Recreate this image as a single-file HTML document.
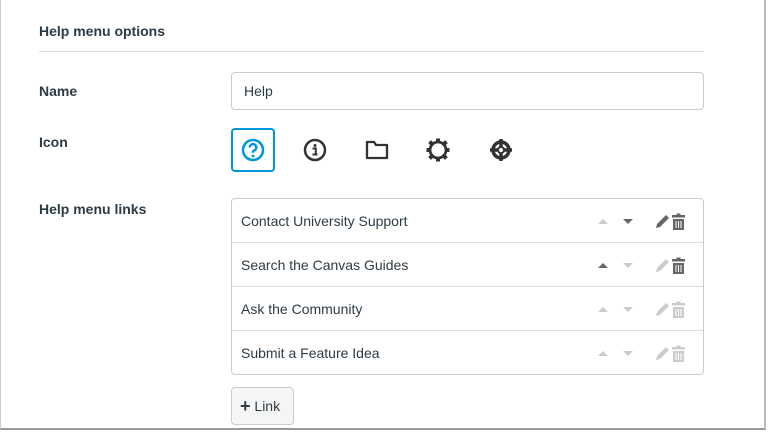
<!DOCTYPE html>
<html><head><style>
body{margin:0;width:769px;height:434px;background:#fff;font-family:"Liberation Sans",sans-serif;color:#2d3b45;overflow:hidden;position:relative}
.card{position:absolute;left:0;top:0;width:766px;height:430px;border-right:2px solid #bbb;border-bottom:2px solid #999;border-left:1px solid #ccc;box-sizing:border-box}
.h{position:absolute;left:39px;top:23px;font-size:14px;font-weight:bold}
.hr{position:absolute;left:39px;top:51px;width:665px;height:1px;background:#ddd}
.lbl{position:absolute;left:39px;font-size:14px;font-weight:bold}
.inp{position:absolute;left:231px;top:72px;width:473px;height:38px;border:1px solid #ccc;border-radius:4px;box-sizing:border-box;padding:10px 12px;font-size:14px}
.ic{position:absolute;top:128px;width:44px;height:44px;box-sizing:border-box}
.ic svg{position:absolute;left:10px;top:10px}
.sel{border:2px solid #0096db;border-radius:4px}
.list{position:absolute;left:231px;top:198px;width:473px;height:177px;border:1px solid #ccc;border-radius:4px;box-sizing:border-box}
.row{height:44px;border-bottom:1px solid #ddd;position:relative;font-size:14px;box-sizing:border-box}
.row:last-child{border-bottom:none}
.row span{position:absolute;left:9px;top:14px}
.row svg{position:absolute;left:364px;top:13px}
.btn{position:absolute;left:231px;top:387px;width:63px;height:38px;background:#f5f5f5;border:1px solid #ccc;border-radius:4px;box-sizing:border-box;font-size:14px;padding:10px 0 0 8px}
</style></head><body>
<div class="card"></div>
<div class="h">Help menu options</div>
<div class="hr"></div>
<div class="lbl" style="top:83px">Name</div>
<div class="inp">Help</div>
<div class="lbl" style="top:134px">Icon</div>
<div class="ic sel" style="left:231px"><svg width="24" height="24" viewBox="0 0 24 24" style="left:8px;top:8px"><circle cx="12" cy="12" r="10" fill="none" stroke="#0096db" stroke-width="2.5"/><path d="M8.7 9.5a3.3 3.3 0 1 1 4.3 3.1c-.8.3-1 .8-1 1.6v.6" fill="none" stroke="#0096db" stroke-width="2.5"/><circle cx="12" cy="18" r="1.4" fill="#0096db"/></svg></div>
<div class="ic" style="left:293px"><svg width="24" height="24" viewBox="0 0 24 24"><circle cx="12" cy="12" r="10" fill="none" stroke="#333" stroke-width="2.5"/><circle cx="12" cy="7.5" r="1.5" fill="#333"/><path d="M9.5 10.5h3.3v6h1.7M9.5 16.5h5" fill="none" stroke="#333" stroke-width="2"/></svg></div>
<div class="ic" style="left:355px"><svg width="24" height="24" viewBox="0 0 24 24"><path d="M2 4h7l2 3h11v13H2z" fill="none" stroke="#333" stroke-width="2.3" stroke-linejoin="round"/></svg></div>
<div class="ic" style="left:416px"><svg width="24" height="24" viewBox="0 0 24 24"><circle cx="12" cy="12" r="8" fill="none" stroke="#333" stroke-width="2.8"/><g fill="#333"><rect x="10" y="0.5" width="4" height="4"/><rect x="10" y="19.5" width="4" height="4"/><rect x="0.5" y="10" width="4" height="4"/><rect x="19.5" y="10" width="4" height="4"/><rect x="3" y="3" width="4" height="4" transform="rotate(45 5 5)"/><rect x="17" y="3" width="4" height="4" transform="rotate(45 19 5)"/><rect x="3" y="17" width="4" height="4" transform="rotate(45 5 19)"/><rect x="17" y="17" width="4" height="4" transform="rotate(45 19 19)"/></g></svg></div>
<div class="ic" style="left:479px"><svg width="24" height="24" viewBox="0 0 24 24"><circle cx="12" cy="12" r="8" fill="none" stroke="#333" stroke-width="3.5"/><circle cx="12" cy="12" r="3" fill="none" stroke="#333" stroke-width="2"/><path d="M12 1v8M12 15v8M1 12h8M15 12h8" stroke="#333" stroke-width="3.5"/></svg></div>
<div class="lbl" style="top:201px">Help menu links</div>
<div class="list">
<div class="row"><span>Contact University Support</span><svg width="100" height="18"><path d="M2 12l5-5 5 5z" fill="#ccc"/><path d="M27 7l5 5 5-5z" fill="#666"/><path d="M60 16l1-4 9-9 3 3-9 9z" fill="#666"/><path d="M76 3h4.5v-1.5h4v1.5h4.5v2.5h-13zM77 7h11v11h-11z" fill="#666"/><path d="M80 9v7M82.5 9v7M85 9v7" stroke="#fff" stroke-width="1"/></svg></div>
<div class="row"><span>Search the Canvas Guides</span><svg width="100" height="18"><path d="M2 12l5-5 5 5z" fill="#666"/><path d="M27 7l5 5 5-5z" fill="#ccc"/><path d="M60 16l1-4 9-9 3 3-9 9z" fill="#ccc"/><path d="M76 3h4.5v-1.5h4v1.5h4.5v2.5h-13zM77 7h11v11h-11z" fill="#666"/><path d="M80 9v7M82.5 9v7M85 9v7" stroke="#fff" stroke-width="1"/></svg></div>
<div class="row"><span>Ask the Community</span><svg width="100" height="18"><path d="M2 12l5-5 5 5z" fill="#ccc"/><path d="M27 7l5 5 5-5z" fill="#ccc"/><path d="M60 16l1-4 9-9 3 3-9 9z" fill="#ccc"/><path d="M76 3h4.5v-1.5h4v1.5h4.5v2.5h-13zM77 7h11v11h-11z" fill="#ccc"/><path d="M80 9v7M82.5 9v7M85 9v7" stroke="#fff" stroke-width="1"/></svg></div>
<div class="row"><span>Submit a Feature Idea</span><svg width="100" height="18"><path d="M2 12l5-5 5 5z" fill="#ccc"/><path d="M27 7l5 5 5-5z" fill="#ccc"/><path d="M60 16l1-4 9-9 3 3-9 9z" fill="#ccc"/><path d="M76 3h4.5v-1.5h4v1.5h4.5v2.5h-13zM77 7h11v11h-11z" fill="#ccc"/><path d="M80 9v7M82.5 9v7M85 9v7" stroke="#fff" stroke-width="1"/></svg></div>
</div>
<div class="btn"><b style="font-size:18px;line-height:14px;vertical-align:-1px">+</b> Link</div>
</body></html>
